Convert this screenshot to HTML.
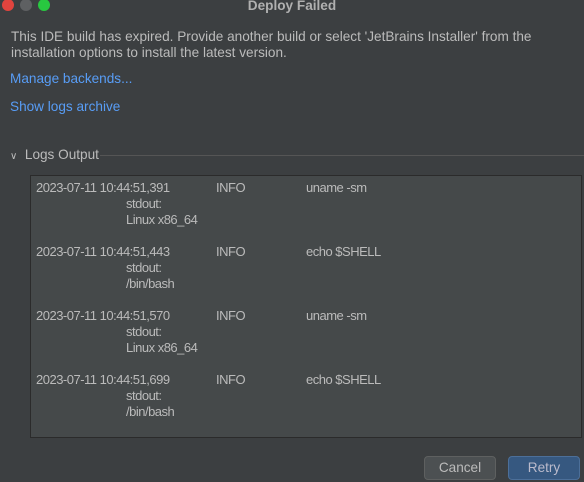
<!DOCTYPE html>
<html><head><style>
body{margin:0;width:584px;height:482px;background:#3c3f41;font-family:"Liberation Sans",sans-serif;color:#bbbbbb;position:relative;overflow:hidden;font-size:13.6px}
.a{position:absolute;white-space:nowrap}
.dot{position:absolute;top:0;width:12px;height:12px;border-radius:50%}
.link{color:#589df6}
.box{position:absolute;left:30px;top:175px;width:552px;height:263px;background:#45494a;border:1px solid #2b2b2b;box-sizing:border-box}
.btn{position:absolute;top:456px;height:24px;border-radius:4px;box-sizing:border-box;text-align:center;line-height:22px;font-size:13.6px}
.log{font-size:13px;letter-spacing:-0.5px}
</style></head><body>
<div class="dot" style="left:2px;top:-1px;background:#e0443e"></div>
<div class="dot" style="left:20px;top:-1px;background:#5e6062"></div>
<div class="dot" style="left:38px;top:-1px;background:#28c840"></div>
<div class="a" style="left:0;width:584px;text-align:center;top:-2px;font-weight:bold;color:#b0b0b0">Deploy Failed</div>
<div class="a" style="left:11px;top:29px;line-height:16px">This IDE build has expired. Provide another build or select 'JetBrains Installer' from the<br>installation options to install the latest version.</div>
<div class="a link" style="left:10px;top:71px">Manage backends...</div>
<div class="a link" style="left:10px;top:99px">Show logs archive</div>
<div class="a" style="left:10px;top:147px"><span style="font-size:10px">&#8744;</span>&nbsp; Logs Output</div>
<div class="a" style="left:100px;top:155px;width:484px;height:1px;background:#555"></div>
<div class="box"></div>
<div class="a log" style="left:36px;top:180px;line-height:16px">
<div style="position:relative;height:64px"><span class="a" style="left:0">2023-07-11 10:44:51,391</span><span class="a" style="left:180px">INFO</span><span class="a" style="left:270px">uname -sm</span><span class="a" style="left:90px;top:16px">stdout:</span><span class="a" style="left:90px;top:32px">Linux x86_64</span></div>
<div style="position:relative;height:64px"><span class="a" style="left:0">2023-07-11 10:44:51,443</span><span class="a" style="left:180px">INFO</span><span class="a" style="left:270px">echo $SHELL</span><span class="a" style="left:90px;top:16px">stdout:</span><span class="a" style="left:90px;top:32px">/bin/bash</span></div>
<div style="position:relative;height:64px"><span class="a" style="left:0">2023-07-11 10:44:51,570</span><span class="a" style="left:180px">INFO</span><span class="a" style="left:270px">uname -sm</span><span class="a" style="left:90px;top:16px">stdout:</span><span class="a" style="left:90px;top:32px">Linux x86_64</span></div>
<div style="position:relative;height:64px"><span class="a" style="left:0">2023-07-11 10:44:51,699</span><span class="a" style="left:180px">INFO</span><span class="a" style="left:270px">echo $SHELL</span><span class="a" style="left:90px;top:16px">stdout:</span><span class="a" style="left:90px;top:32px">/bin/bash</span></div>
</div>
<div class="btn" style="left:424px;width:72px;background:#4c5052;border:1px solid #5e6060">Cancel</div>
<div class="btn" style="left:508px;width:72px;background:#365880;border:1px solid #4c6f99;color:#bbc">Retry</div>
</body></html>
